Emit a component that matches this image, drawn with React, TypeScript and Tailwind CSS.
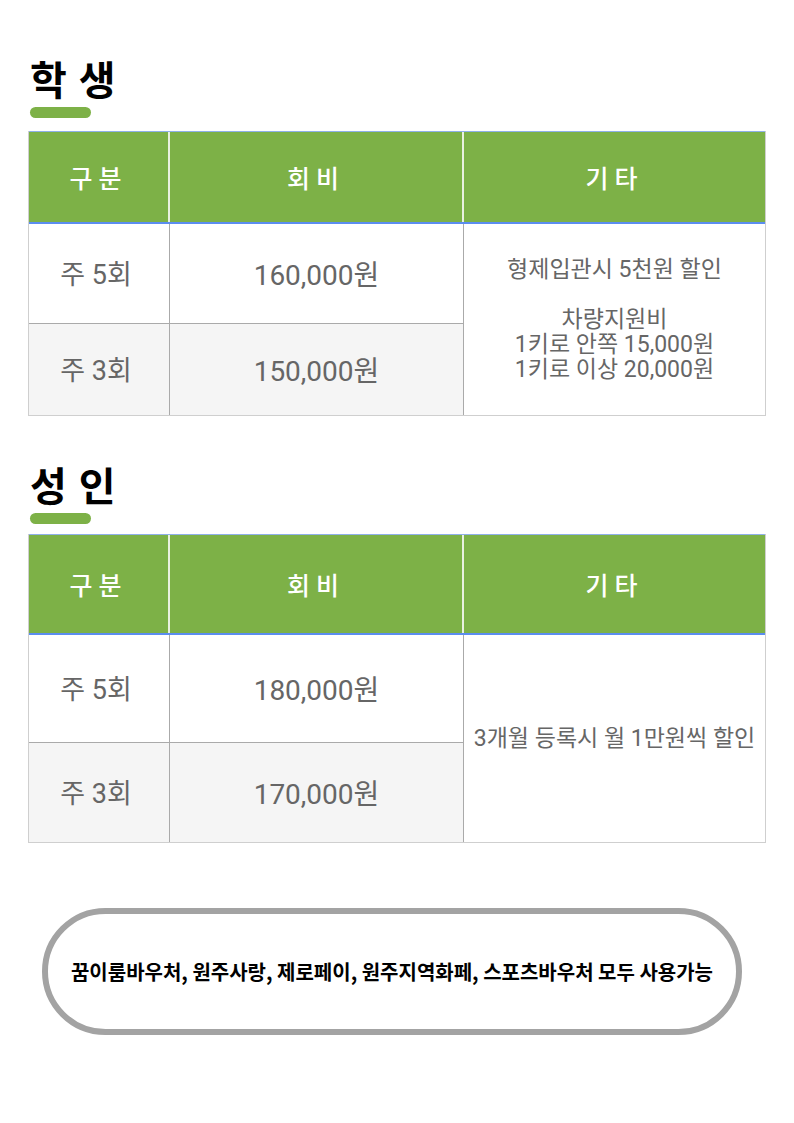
import type { ReactNode } from 'react'

type Row = { label: string; price: string }

const students: Row[] = [
  { label: '주 5회', price: '160,000원' },
  { label: '주 3회', price: '150,000원' },
]

const adults: Row[] = [
  { label: '주 5회', price: '180,000원' },
  { label: '주 3회', price: '170,000원' },
]

function SectionTitle({ children }: { children: ReactNode }) {
  return (
    <div className="pl-[30px]">
      <h2 className="text-[40px] font-bold leading-[48px] tracking-[1px] text-black">{children}</h2>
      <div className="mt-[1px] h-[11px] w-[61px] rounded-full bg-[#7db147]" />
    </div>
  )
}

function PriceTable({
  rows,
  note,
  headH,
  rowH,
}: {
  rows: Row[]
  note: ReactNode
  headH: string
  rowH: [string, string]
}) {
  return (
    <div className="mx-[28px] border border-[#cfcfcf] border-t-0">
      {/* 헤더 */}
      <div
        className={`grid grid-cols-[141px_294px_1fr] border-t border-t-[#8fb0ea] border-b-2 border-b-[#5b8def] bg-[#7db147] pt-[6px] text-[25px] font-medium tracking-[6px] text-white ${headH}`}
      >
        <div className="flex items-center justify-center border-r-2 border-r-[#e9f1e0] -mt-[6px] pt-[6px]">구분</div>
        <div className="flex items-center justify-center border-r-2 border-r-[#e9f1e0] -mt-[6px] pt-[6px]">회비</div>
        <div className="flex items-center justify-center">기타</div>
      </div>
      {/* 본문 */}
      <div className="grid grid-cols-[141px_294px_1fr] text-[#666]">
        {rows.map((r, i) => (
          <div key={r.label} className="contents">
            <div
              className={`flex items-center justify-center border-r border-[#aaa] pt-[4px] pr-[6px] text-[27px] ${rowH[i]} ${
                i === 1 ? 'border-t border-t-[#aaa] bg-[#f5f5f5]' : 'bg-white'
              }`}
              style={{ gridRow: i + 1, gridColumn: 1 }}
            >
              {r.label}
            </div>
            <div
              className={`flex items-center justify-center border-r border-[#aaa] pt-[4px] text-[28px] ${rowH[i]} ${
                i === 1 ? 'border-t border-t-[#aaa] bg-[#f5f5f5]' : 'bg-white'
              }`}
              style={{ gridRow: i + 1, gridColumn: 2 }}
            >
              {r.price}
            </div>
          </div>
        ))}
        <div className="row-span-2 col-start-3 row-start-1 flex items-center justify-center bg-white text-center text-[23px] leading-[25px]">
          {note}
        </div>
      </div>
    </div>
  )
}

export default function App() {
  return (
    <div
      className="min-h-[1123px] w-[794px] bg-white pt-[58px]"
      style={{ fontFamily: "Roboto, 'Noto Sans CJK KR', sans-serif" }}
    >
      <SectionTitle>학 생</SectionTitle>
      <div className="mt-[13px]">
        <PriceTable
          rows={students}
          headH="h-[93px]"
          rowH={['h-[99px]', 'h-[92px]']}
          note={
            <div>
              형제입관시 5천원 할인
              <br />
              <br />
              차량지원비
              <br />
              1키로 안쪽 15,000원
              <br />
              1키로 이상 20,000원
            </div>
          }
        />
      </div>

      <div className="mt-[48px]">
        <SectionTitle>성 인</SectionTitle>
      </div>
      <div className="mt-[10px]">
        <PriceTable
          rows={adults}
          headH="h-[101px]"
          rowH={['h-[107px]', 'h-[100px]']}
          note={<div>3개월 등록시 월 1만원씩 할인</div>}
        />
      </div>

      {/* 사용 가능 결제 수단 */}
      <div className="ml-[42px] mt-[65px] flex h-[127px] w-[700px] items-center justify-center rounded-full border-[6px] border-[#a3a3a3] bg-white">
        <p
          className="text-[20px] font-bold tracking-[0px] text-black"
          style={{ fontFamily: "'Noto Sans CJK KR', sans-serif" }}
        >
          꿈이룸바우처, 원주사랑, 제로페이, 원주지역화페, 스포츠바우처 모두 사용가능
        </p>
      </div>
    </div>
  )
}
